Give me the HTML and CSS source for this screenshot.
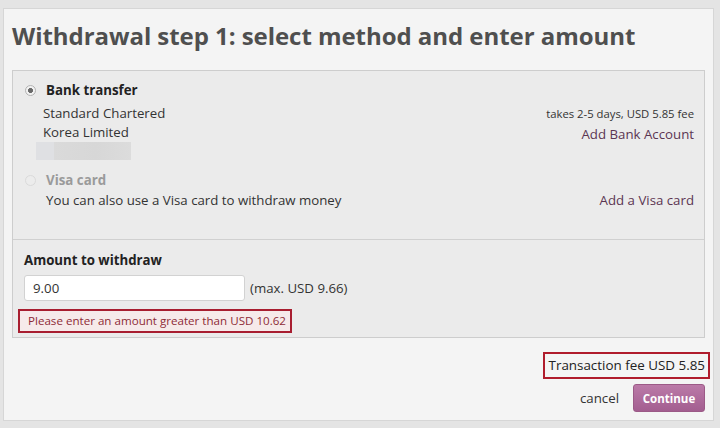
FILE: index.html
```html
<!DOCTYPE html>
<html>
<head>
<meta charset="utf-8">
<link rel="stylesheet" href="styles.css">
</head>
<body>
<div class="panel">
  <h1 class="title">Withdrawal step 1: select method and enter amount</h1>
  <div class="box">
    <div class="methods">
      <div class="method">
        <div class="method-head">
          <span class="radio checked"></span>
          <span class="method-name">Bank transfer</span>
        </div>
        <div class="method-body">
          <div class="bank-info">
            <div class="bank-line">Standard Chartered</div>
            <div class="bank-line">Korea Limited</div>
            <div class="blur"></div>
          </div>
          <div class="method-right">
            <div class="note">takes 2-5 days, USD 5.85 fee</div>
            <a class="link">Add Bank Account</a>
          </div>
        </div>
      </div>
      <div class="method disabled">
        <div class="method-head">
          <span class="radio"></span>
          <span class="method-name">Visa card</span>
        </div>
        <div class="visa-row">
          <span class="visa-desc">You can also use a Visa card to withdraw money</span>
          <a class="link">Add a Visa card</a>
        </div>
      </div>
    </div>
    <div class="amount">
      <div class="amount-label">Amount to withdraw</div>
      <div class="amount-row">
        <div class="input">9.00</div>
        <span class="max">(max. USD 9.66)</span>
      </div>
      <div class="error">Please enter an amount greater than USD 10.62</div>
    </div>
  </div>
  <div class="footer">
    <div class="fee">Transaction fee USD 5.85</div>
    <div class="actions">
      <a class="cancel">cancel</a>
      <button class="continue">Continue</button>
    </div>
  </div>
</div>
</body>
</html>
```

FILE: styles.css
```css
html, body { margin: 0; padding: 0; }
body {
  background: #e4e4e4;
  font-family: "Open Sans", "Noto Sans", sans-serif;
  color: #333;
  width: 720px;
  height: 428px;
  overflow: hidden;
}
.panel {
  margin: 8px 0 0 3px;
  width: 709px;
  height: 411px;
  background: #f4f4f4;
  border: 1px solid #d6d6d6;
  box-sizing: content-box;
  display: flex;
  flex-direction: column;
}
.title {
  margin: 0;
  padding: 10px 0 0 8px;
  height: 51px;
  box-sizing: content-box;
  font-size: 24px;
  line-height: 34px;
  font-weight: 700;
  color: #4f4f4f;
  letter-spacing: -0.05px;
}
.box {
  margin: 0 0 0 8px;
  width: 691px;
  border: 1px solid #cdcdcd;
  background: #ebebeb;
}
.methods {
  padding: 9px 10px 0 12px;
  height: 169px;
  border-bottom: 1px solid #d0d0d0;
  box-sizing: border-box;
}
.method-head {
  display: flex;
  align-items: center;
  height: 20px;
}
.radio {
  width: 11px;
  height: 11px;
  border-radius: 50%;
  border: 1px solid #c4c4c4;
  background: #f4f4f4;
  box-sizing: border-box;
  margin-right: 10px;
  display: inline-block;
}
.radio.checked {
  border-color: #b4b4b4;
  background: radial-gradient(circle, #6a6a6a 0 2.2px, #f2f2f2 2.8px);
}
.method-name {
  font-weight: 700;
  font-size: 13.3px;
  color: #222;
}
.method-body {
  display: flex;
  justify-content: space-between;
  margin-top: 4px;
}
.bank-info { padding-left: 18px; }
.bank-line {
  font-size: 13.25px;
  line-height: 19px;
  color: #333;
}
.blur {
  margin: 0 0 0 -7px;
  width: 95px;
  height: 18px;
  background: linear-gradient(90deg, #dfe0e3 0 18px, #dadada 18px, #d7d7d7 60px, #dcdcdc);
}
.method-right {
  text-align: right;
  padding-top: 2px;
}
.note {
  font-size: 11.3px;
  line-height: 16px;
  color: #333;
}
.link {
  font-size: 13.25px;
  line-height: 20px;
  color: #5b3552;
  text-decoration: none;
}
.method.disabled { margin-top: 10px; }
.method.disabled .method-name { color: #9a9a9a; }
.method.disabled .radio { border-color: #dadada; background: #ececec; }
.visa-row {
  display: flex;
  justify-content: space-between;
  padding-left: 21px;
  font-size: 13.25px;
  line-height: 20px;
}
.visa-desc { color: #333; }
.amount {
  padding: 10px 10px 0 11px;
  height: 97px;
  box-sizing: border-box;
}
.amount-label {
  font-weight: 700;
  font-size: 13.25px;
  line-height: 20px;
  color: #222;
}
.amount-row {
  display: flex;
  align-items: center;
  margin-top: 5px;
}
.input {
  width: 221px;
  height: 26px;
  box-sizing: border-box;
  background: #fff;
  border: 1px solid #d2d2d2;
  border-radius: 3px;
  padding: 0 8px;
  font-size: 13.25px;
  line-height: 24px;
  color: #333;
}
.max {
  margin-left: 5px;
  font-size: 13.25px;
  color: #333;
}
.error {
  margin: 8px 0 0 -6px;
  width: 274px;
  height: 24px;
  box-sizing: border-box;
  border: 2px solid #a81e30;
  background: #f6eaea;
  color: #8e2a36;
  font-size: 11.6px;
  line-height: 20px;
  padding-left: 8px;
  white-space: nowrap;
}
.footer {
  display: flex;
  flex-direction: column;
  align-items: flex-end;
  padding: 14px 3px 0 0;
}
.fee {
  border: 2px solid #b01c2c;
  height: 27px;
  box-sizing: border-box;
  padding: 0 3px 0 4px;
  font-size: 13.4px;
  line-height: 23px;
  color: #222;
}
.actions {
  display: flex;
  align-items: center;
  margin-top: 5px;
  margin-right: 5px;
}
.cancel {
  font-size: 13.3px;
  color: #333;
  margin-right: 14px;
}
.continue {
  width: 72px;
  height: 28px;
  border: 1px solid #9c5a87;
  border-radius: 3px;
  background: linear-gradient(#bb7aa8, #a35e90);
  color: #fff;
  font-family: "Open Sans", sans-serif;
  font-weight: 700;
  font-size: 11.5px;
  padding: 0;
}
```
